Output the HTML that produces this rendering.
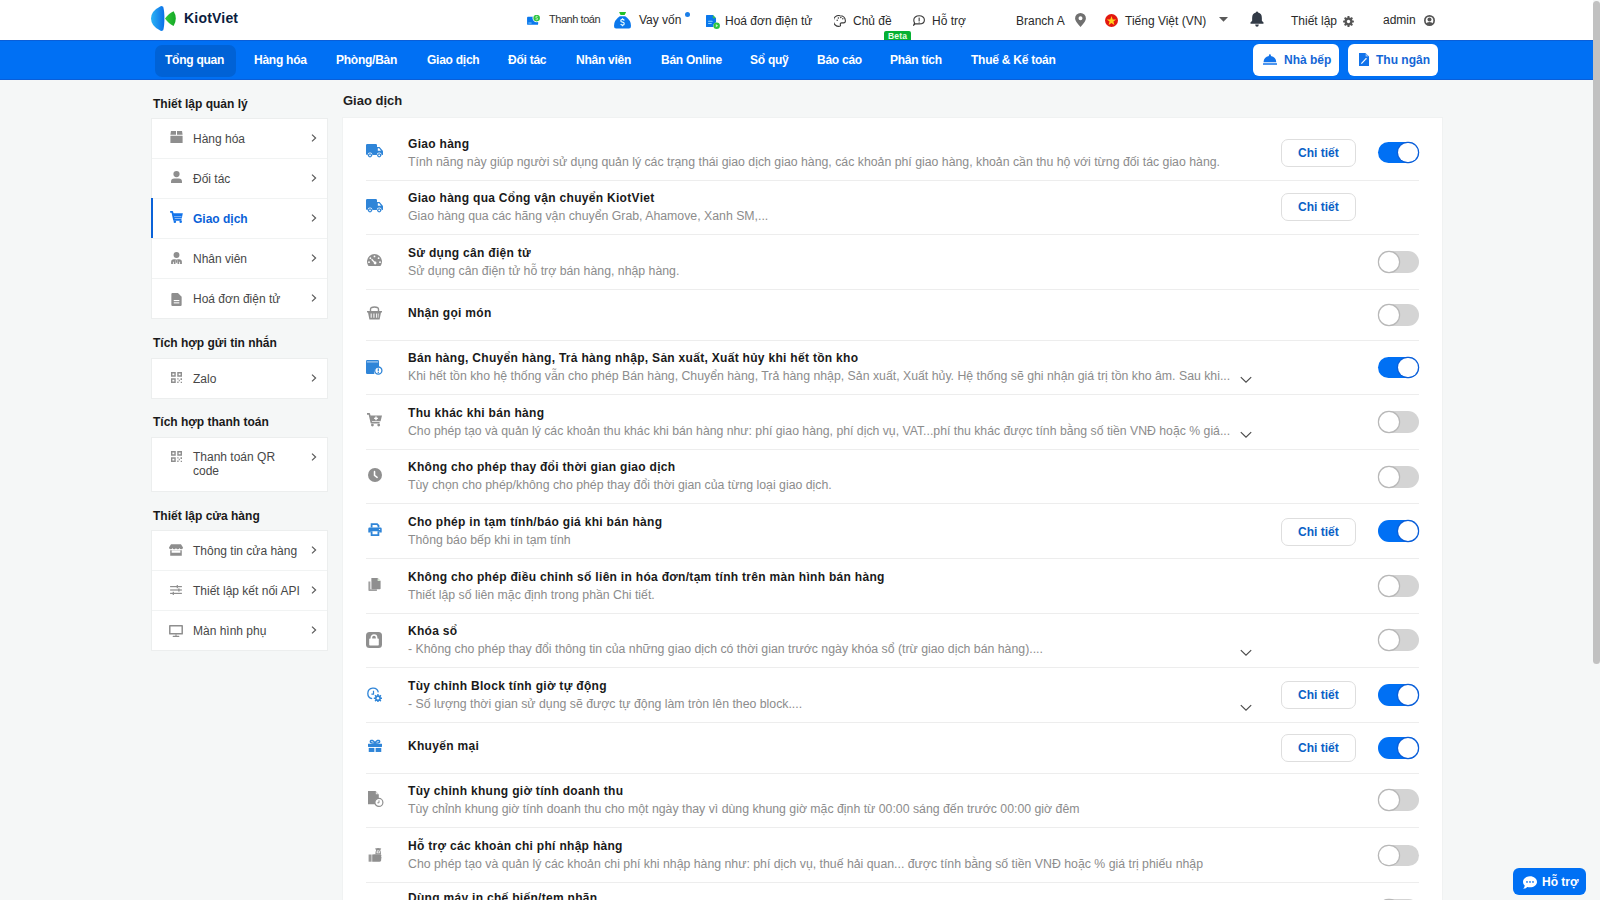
<!DOCTYPE html>
<html lang="vi"><head><meta charset="utf-8"><title>KiotViet - Thiết lập</title>
<style>
*{box-sizing:border-box;margin:0;padding:0}
html,body{width:1600px;height:900px;overflow:hidden}
body{background:#f5f7f7;font-family:"Liberation Sans",sans-serif;position:relative;color:#1a1a1a}
.a{position:absolute;white-space:nowrap}
.t12{font-size:12px;line-height:12px}
.hdr{position:absolute;left:0;top:0;width:1593px;height:40px;background:#fff}
.nav{position:absolute;left:0;top:40px;width:1593px;height:40px;background:#0070f4;border-top:1px solid #0a5ed8;border-bottom:1px solid #0a5ed8}
.navi{position:absolute;top:14px;color:#fff;font-weight:bold;font-size:12px;line-height:12px;white-space:nowrap}
.pill{position:absolute;left:155px;top:4px;width:81px;height:32px;background:#0062d6;border-radius:7px}
.nbtn{position:absolute;top:4px;height:31px;background:#fff;border-radius:6px}
.nbtn span{position:absolute;top:10px;color:#0a5fd0;font-weight:bold;font-size:12px;line-height:12px;white-space:nowrap}
.htxt{position:absolute;font-size:12px;line-height:12px;color:#2a2a2a;white-space:nowrap}
.sh{position:absolute;left:153px;font-size:12px;line-height:12px;font-weight:bold;color:#1a1a1a;white-space:nowrap}
.card{position:absolute;left:151px;width:177px;background:#fff;border:1px solid #eef0f0}
.srow{position:absolute;left:0;width:175px;height:40px;border-top:1px solid #f0f2f2}
.srow .lb{position:absolute;left:41px;top:14px;font-size:12px;line-height:12px;color:#474747;white-space:nowrap}
.srow .ic{position:absolute;left:18px;top:12px}
.chev{position:absolute;left:159px;top:16px}
.panel{position:absolute;left:343px;top:117px;width:1099px;height:800px;background:#fff}
.sep{position:absolute;left:366px;width:1053px;height:1px;background:#ececec}
.rt{position:absolute;left:408px;font-size:12px;line-height:12px;font-weight:bold;color:#1a1a1a;white-space:nowrap}
.rd{position:absolute;left:408px;font-size:12px;line-height:12px;color:#8c8c8c;white-space:nowrap}
.btn{position:absolute;left:1281px;width:75px;height:28px;border:1px solid #dcdcdc;border-radius:7px;background:#fff}
.btn span{position:absolute;left:16px;top:7px;font-size:12px;line-height:12px;font-weight:bold;color:#0a5fc7;white-space:nowrap}
.tg{position:absolute;left:1377px;width:42px;height:22px;border-radius:11px}
.tg.on{background:#0070f4}
.tg.off{background:#d4d4d4}
.tg .k{position:absolute;top:1px;width:20px;height:20px;border-radius:10px;background:#fff}
.tg.on .k{left:21px;box-shadow:0 0 0 1px #0a5ed8}
.tg.off .k{left:1px;box-shadow:0 0 0 1px #bdbdbd}
.ic{position:absolute}
</style></head><body>
<div class="hdr"></div>
<svg class="ic" style="left:151px;top:6px" width="25" height="25" viewBox="0 0 25 25" ><defs><linearGradient id="lgb" x1="0" y1="0" x2="1" y2="0"><stop offset="0" stop-color="#2bb3f5"/><stop offset="1" stop-color="#0a6fe8"/></linearGradient><linearGradient id="lgg" x1="0" y1="0" x2="1" y2="0"><stop offset="0" stop-color="#34c93a"/><stop offset="1" stop-color="#13a826"/></linearGradient></defs><path fill="url(#lgb)" d="M9.6 0.2Q10.6 -0.2 12.2 0.8Q13.4 5 13.4 12.4Q13.4 20 12.2 24.2Q10.6 25.2 9.6 24.8Q0 20 0 12.4Q0 5 9.6 0.2Z"/><path fill="url(#lgg)" d="M14 12.6Q18 7 22.6 5.2Q24.8 8.5 24.8 12.6Q24.8 16.8 22.6 20Q18 18.2 14 12.6Z"/></svg>
<div class="a" style="left:184px;top:11px;font-size:14px;line-height:14px;font-weight:bold;color:#0c1d40;letter-spacing:0.2px">KiotViet</div>
<svg class="ic" style="left:527px;top:15px" width="14" height="10" viewBox="0 0 13 9.4" ><path fill="#0b78ec" d="M0.8 1.6H6L10.4 6.4V8.4Q10.4 9.2 9.6 9.2H0.8Q0 9.2 0 8.4V2.4Q0 1.6 0.8 1.6Z"/><rect x="1.2" y="7" width="3" height="1.1" fill="#6cc0ff"/><circle cx="9" cy="2.9" r="3.9" fill="#fff"/><circle cx="9" cy="2.9" r="3.1" fill="#2fc43e"/><path fill="none" stroke="#d4f7d4" stroke-width="0.8" d="M10 1.7Q9.7 1.3 9 1.3Q8.1 1.3 8.1 2Q8.1 2.6 9 2.8Q9.9 3 9.9 3.7Q9.9 4.4 9 4.4Q8.3 4.4 8 4"/></svg>
<div class="a" style="left:549px;top:14px;font-size:11px;line-height:11px;font-weight:normal;color:#333;letter-spacing:-0.45px">Thanh toán</div>
<svg class="ic" style="left:614.2px;top:11.8px" width="17" height="17" viewBox="0 0 16.6 16.6" ><path fill="#22c228" d="M5 0H11.8L10.4 2.9H6.4Z"/><path fill="#0b78ec" d="M5.6 4.2H11Q16.6 8 16.6 13.6Q16.6 16.2 14.6 16.2H2Q0 16.2 0 13.6Q0 8 5.6 4.2Z"/><path fill="none" stroke="#e6fbff" stroke-width="1.2" d="M10 8.2Q9.6 7.2 8.3 7.2Q6.6 7.2 6.6 8.5Q6.6 9.6 8.3 9.9Q10 10.2 10 11.5Q10 12.8 8.3 12.8Q7 12.8 6.6 11.8"/><path stroke="#e6fbff" stroke-width="1.1" d="M8.3 6.2V7.4M8.3 12.6V13.8"/></svg>
<div class="a" style="left:639px;top:14px;font-size:12px;line-height:12px;font-weight:normal;color:#2a2a2a;">Vay vốn</div>
<div class="a" style="left:685px;top:12px;width:5px;height:5px;border-radius:3px;background:#1a7ee8"></div>
<svg class="ic" style="left:706px;top:15px" width="14" height="14" viewBox="0 0 13.4 13.4" ><path fill="#0b78ec" d="M0.6 0H6.6L9.6 3.2V7.2A3.2 3.2 0 0 0 7.2 11.6H0.6Q0 11.6 0 11V0.6Q0 0 0.6 0Z"/><path fill="#36c44a" d="M6.6 0L9.6 3.2H6.6Z"/><rect x="2" y="5.4" width="4.4" height="1.1" rx="0.5" fill="#8fd3ff"/><rect x="2" y="7.6" width="3.6" height="1.1" rx="0.5" fill="#8fd3ff"/><circle cx="10.2" cy="10.2" r="3.1" fill="#2fc43e"/><path fill="#c9f5c9" d="M9.4 8.7L11.6 10.2L9.4 11.7Z"/></svg>
<div class="a" style="left:725px;top:15px;font-size:12px;line-height:12px;font-weight:normal;color:#2a2a2a;">Hoá đơn điện tử</div>
<svg class="ic" style="left:834px;top:15px" width="12" height="12" viewBox="0 0 12 11.8" ><path fill="none" stroke="#3a3a3a" stroke-width="1.1" d="M6 0.6A5.4 5.4 0 1 0 5.6 11.2Q6.8 11 6.4 9.6Q5.8 7.8 7.8 7.8H9.6Q11.4 7.8 11.4 5.6Q11 0.6 6 0.6Z"/><circle cx="3.2" cy="5.2" r="0.75" fill="#3a3a3a"/><circle cx="4.4" cy="3" r="0.75" fill="#3a3a3a"/><circle cx="6.8" cy="2.4" r="0.75" fill="#3a3a3a"/><circle cx="8.8" cy="3.6" r="0.75" fill="#3a3a3a"/></svg>
<div class="a" style="left:853px;top:15px;font-size:12px;line-height:12px;font-weight:normal;color:#2a2a2a;">Chủ đề</div>
<div class="a" style="left:884px;top:31px;width:27px;height:9px;background:#06b033;border-radius:2px 2px 0 0"></div>
<div class="a" style="left:888px;top:31.5px;font-size:8.5px;line-height:8.5px;font-weight:bold;color:#e8ffe8;letter-spacing:0.2px">Beta</div>
<svg class="ic" style="left:913px;top:15px" width="12" height="11" viewBox="0 0 12 11" ><path fill="none" stroke="#3a3a3a" stroke-width="1.1" stroke-linejoin="round" d="M6.2 0.8C9.4 0.8 11.4 2.6 11.4 4.9C11.4 7.2 9.4 8.9 6.2 8.9H2.2L0.6 10.3L1.6 8C1 7.2 0.8 6 0.8 4.9C0.8 2.6 3 0.8 6.2 0.8Z"/><rect x="5.6" y="2.6" width="1.1" height="3.4" fill="#3a3a3a"/><rect x="5.6" y="6.6" width="1.1" height="1" fill="#3a3a3a"/></svg>
<div class="a" style="left:932px;top:15px;font-size:12px;line-height:12px;font-weight:normal;color:#2a2a2a;">Hỗ trợ</div>
<div class="a" style="left:1016px;top:15px;font-size:12px;line-height:12px;font-weight:normal;color:#2a2a2a;">Branch A</div>
<svg class="ic" style="left:1075px;top:12.5px" width="11" height="14" viewBox="0 0 10.4 13.4" ><path fill="#707070" fill-rule="evenodd" d="M5.2 0A5.2 5.2 0 0 1 10.4 5.2Q10.4 7.6 5.2 13.4Q0 7.6 0 5.2A5.2 5.2 0 0 1 5.2 0ZM5.2 3.2A1.9 1.9 0 1 0 5.2 7A1.9 1.9 0 1 0 5.2 3.2Z"/></svg>
<svg class="ic" style="left:1105px;top:14px" width="13" height="13" viewBox="0 0 13 13" ><circle cx="6.5" cy="6.5" r="6.5" fill="#e3180f"/><polygon points="6.50,2.10 7.68,5.38 11.16,5.49 8.40,7.62 9.38,10.96 6.50,9.00 3.62,10.96 4.60,7.62 1.84,5.49 5.32,5.38" fill="#ffd21e"/></svg>
<div class="a" style="left:1125px;top:15px;font-size:12px;line-height:12px;font-weight:normal;color:#2a2a2a;">Tiếng Việt (VN)</div>
<svg class="ic" style="left:1219px;top:17px" width="9" height="5" viewBox="0 0 9 5" ><path fill="#5a5a5a" d="M0 0H9L4.5 4.8Z"/></svg>
<svg class="ic" style="left:1250px;top:11px" width="14" height="16" viewBox="0 0 13.6 15.8" ><path fill="#323a46" d="M6.8 0.6Q7.8 0.6 7.9 1.5Q11.6 2.4 11.6 6.8V9.6L13.4 11.6Q13.6 12.6 12.6 12.6H1Q0 12.6 0.2 11.6L2 9.6V6.8Q2 2.4 5.7 1.5Q5.8 0.6 6.8 0.6Z"/><path fill="#323a46" d="M5 13.4H8.6Q8.4 15.6 6.8 15.6Q5.2 15.6 5 13.4Z"/></svg>
<div class="a" style="left:1291px;top:15px;font-size:12px;line-height:12px;font-weight:normal;color:#2a2a2a;">Thiết lập</div>
<svg class="ic" style="left:1343px;top:15.6px" width="11" height="11" viewBox="0 0 10.6 10.4" ><rect x="4.3" y="0" width="2" height="3" rx="0.5" fill="#555" transform="rotate(0 5.3 5.2)"/><rect x="4.3" y="0" width="2" height="3" rx="0.5" fill="#555" transform="rotate(45 5.3 5.2)"/><rect x="4.3" y="0" width="2" height="3" rx="0.5" fill="#555" transform="rotate(90 5.3 5.2)"/><rect x="4.3" y="0" width="2" height="3" rx="0.5" fill="#555" transform="rotate(135 5.3 5.2)"/><rect x="4.3" y="0" width="2" height="3" rx="0.5" fill="#555" transform="rotate(180 5.3 5.2)"/><rect x="4.3" y="0" width="2" height="3" rx="0.5" fill="#555" transform="rotate(225 5.3 5.2)"/><rect x="4.3" y="0" width="2" height="3" rx="0.5" fill="#555" transform="rotate(270 5.3 5.2)"/><rect x="4.3" y="0" width="2" height="3" rx="0.5" fill="#555" transform="rotate(315 5.3 5.2)"/><circle cx="5.3" cy="5.2" r="3.8" fill="#555"/><circle cx="5.3" cy="5.2" r="1.6" fill="#fff"/></svg>
<div class="a" style="left:1383px;top:14px;font-size:12px;line-height:12px;font-weight:normal;color:#2a2a2a;">admin</div>
<svg class="ic" style="left:1424px;top:15px" width="11" height="11" viewBox="0 0 10.4 10.4" ><circle cx="5.2" cy="5.2" r="4.4" fill="none" stroke="#555" stroke-width="1.6"/><circle cx="5.2" cy="4.3" r="1.9" fill="#555"/><path fill="#555" d="M1.9 8.6Q2.6 6.6 5.2 6.6Q7.8 6.6 8.5 8.6Q7.2 9.8 5.2 9.8Q3.2 9.8 1.9 8.6Z"/></svg>
<div class="nav"><div class="pill"></div></div>
<div class="a" style="left:165px;top:54px;font-size:12px;line-height:12px;font-weight:bold;color:#fff;letter-spacing:-0.25px">Tổng quan</div>
<div class="a" style="left:254px;top:54px;font-size:12px;line-height:12px;font-weight:bold;color:#fff;letter-spacing:-0.25px">Hàng hóa</div>
<div class="a" style="left:336px;top:54px;font-size:12px;line-height:12px;font-weight:bold;color:#fff;letter-spacing:-0.25px">Phòng/Bàn</div>
<div class="a" style="left:427px;top:54px;font-size:12px;line-height:12px;font-weight:bold;color:#fff;letter-spacing:-0.25px">Giao dịch</div>
<div class="a" style="left:508px;top:54px;font-size:12px;line-height:12px;font-weight:bold;color:#fff;letter-spacing:-0.25px">Đối tác</div>
<div class="a" style="left:576px;top:54px;font-size:12px;line-height:12px;font-weight:bold;color:#fff;letter-spacing:-0.25px">Nhân viên</div>
<div class="a" style="left:661px;top:54px;font-size:12px;line-height:12px;font-weight:bold;color:#fff;letter-spacing:-0.25px">Bán Online</div>
<div class="a" style="left:750px;top:54px;font-size:12px;line-height:12px;font-weight:bold;color:#fff;letter-spacing:-0.25px">Sổ quỹ</div>
<div class="a" style="left:817px;top:54px;font-size:12px;line-height:12px;font-weight:bold;color:#fff;letter-spacing:-0.25px">Báo cáo</div>
<div class="a" style="left:890px;top:54px;font-size:12px;line-height:12px;font-weight:bold;color:#fff;letter-spacing:-0.25px">Phân tích</div>
<div class="a" style="left:971px;top:54px;font-size:12px;line-height:12px;font-weight:bold;color:#fff;letter-spacing:-0.25px">Thuế &amp; Kế toán</div>
<div class="a" style="left:1253px;top:44px;width:86px;height:32px;background:#fff;border-radius:6px"></div>
<svg class="ic" style="left:1263px;top:54px" width="14" height="11" viewBox="0 0 14 10.6" ><path fill="#1273ea" d="M6 0Q7 0 7 1V1.8Q12 2.6 12.4 8H-0.4Q0 2.6 5 1.8V1Q5 0 6 0Z" transform="translate(0.9 0)"/><rect x="0" y="9" width="14" height="1.6" rx="0.3" fill="#1273ea"/></svg>
<div class="a" style="left:1284px;top:54px;font-size:12px;line-height:12px;font-weight:bold;color:#1466d6;">Nhà bếp</div>
<div class="a" style="left:1348px;top:44px;width:90px;height:32px;background:#fff;border-radius:6px"></div>
<svg class="ic" style="left:1359px;top:53px" width="10" height="13" viewBox="0 0 10 13" ><path fill="#1273ea" d="M0 0H6.4L10 3.6V13H0Z"/><path fill="#fff" d="M6.6 0.6V3.4H9.4Z" opacity="0.55"/><path fill="none" stroke="#fff" stroke-width="1.2" d="M2.4 10.6L6.6 6.2"/><circle cx="7" cy="5.8" r="0.8" fill="#fff"/></svg>
<div class="a" style="left:1376px;top:54px;font-size:12px;line-height:12px;font-weight:bold;color:#1466d6;">Thu ngân</div>
<div class="a" style="left:153px;top:98px;font-size:12px;line-height:12px;font-weight:bold;color:#1a1a1a;">Thiết lập quản lý</div>
<div class="a" style="left:151px;top:118px;width:177px;height:201px;background:#fff;border:1px solid #eceeee"></div>
<svg class="ic" style="left:170px;top:131px" width="13" height="12" viewBox="0 0 12.2 12" ><path fill="#8e8e8e" d="M0.6 0H5.6V3.8H0Z"/><path fill="#8e8e8e" d="M6.6 0H11.6L12.2 3.8H6.6Z"/><rect x="0" y="4.8" width="12.2" height="7.2" rx="0.3" fill="#8e8e8e"/></svg>
<div class="a" style="left:193px;top:133px;font-size:12px;line-height:12px;font-weight:normal;color:#474747;">Hàng hóa</div>
<svg class="ic" style="left:311px;top:134px" width="6" height="8" viewBox="0 0 6 8" ><path fill="none" stroke="#5a5a5a" stroke-width="1.2" d="M1 0.6L4.6 4L1 7.4"/></svg>
<div class="a" style="left:152px;top:158px;width:175px;height:1px;background:#f1f3f3"></div>
<svg class="ic" style="left:170.6px;top:171px" width="11" height="12" viewBox="0 0 10.6 11.6" ><circle cx="5.3" cy="3" r="3" fill="#8e8e8e"/><path fill="#8e8e8e" d="M0 11.6V10.3Q0 7.3 3.2 7.3H7.4Q10.6 7.3 10.6 10.3V11.6Z"/></svg>
<div class="a" style="left:193px;top:173px;font-size:12px;line-height:12px;font-weight:normal;color:#474747;">Đối tác</div>
<svg class="ic" style="left:311px;top:174px" width="6" height="8" viewBox="0 0 6 8" ><path fill="none" stroke="#5a5a5a" stroke-width="1.2" d="M1 0.6L4.6 4L1 7.4"/></svg>
<div class="a" style="left:152px;top:198px;width:175px;height:1px;background:#f1f3f3"></div>
<div class="a" style="left:151px;top:198px;width:2px;height:40px;background:#0a62d8"></div>
<svg class="ic" style="left:169.5px;top:211px" width="13" height="12" viewBox="0 0 13 12.3" ><path fill="none" stroke="#1273ea" stroke-width="1.8" stroke-linejoin="round" d="M0 1H2.2L4 9.2H11.6"/><path fill="#1273ea" d="M2.8 2.4H13L11.8 7.8H3.8Z"/><rect x="4" y="5.2" width="7.6" height="1" fill="#7fb3f5"/><circle cx="4.8" cy="11" r="1.3" fill="#1273ea"/><circle cx="10.8" cy="11" r="1.3" fill="#1273ea"/></svg>
<div class="a" style="left:193px;top:213px;font-size:12px;line-height:12px;font-weight:bold;color:#0a62d8;">Giao dịch</div>
<svg class="ic" style="left:311px;top:214px" width="6" height="8" viewBox="0 0 6 8" ><path fill="none" stroke="#5a5a5a" stroke-width="1.2" d="M1 0.6L4.6 4L1 7.4"/></svg>
<div class="a" style="left:152px;top:238px;width:175px;height:1px;background:#f1f3f3"></div>
<svg class="ic" style="left:170.6px;top:251.5px" width="11" height="12" viewBox="0 0 10.6 11.8" ><circle cx="5.3" cy="2.9" r="2.9" fill="#8e8e8e"/><path fill="#8e8e8e" d="M0 11.8V9.8Q0 7.2 2.8 7.2H7.8Q10.6 7.2 10.6 9.8V11.8Z"/><path fill="#fff" d="M4.6 7.2H6L6.4 11.8H4.2Z" opacity="0.9"/><path fill="#8e8e8e" d="M4.9 7.6H5.7L5.9 10.6H4.7Z"/><rect x="1.8" y="9.6" width="1" height="2.2" fill="#fff" opacity="0.8"/><rect x="7.8" y="9.6" width="1" height="2.2" fill="#fff" opacity="0.8"/></svg>
<div class="a" style="left:193px;top:253px;font-size:12px;line-height:12px;font-weight:normal;color:#474747;">Nhân viên</div>
<svg class="ic" style="left:311px;top:254px" width="6" height="8" viewBox="0 0 6 8" ><path fill="none" stroke="#5a5a5a" stroke-width="1.2" d="M1 0.6L4.6 4L1 7.4"/></svg>
<div class="a" style="left:152px;top:278px;width:175px;height:1px;background:#f1f3f3"></div>
<svg class="ic" style="left:171px;top:292.5px" width="11" height="13" viewBox="0 0 10.3 13" ><path fill="#8e8e8e" d="M1 0H6.6L10.3 3.7V12Q10.3 13 9.3 13H1Q0 13 0 12V1Q0 0 1 0Z"/><rect x="2.4" y="7" width="5.6" height="1.1" fill="#fff"/><rect x="2.4" y="9.3" width="5.6" height="1.1" fill="#fff"/></svg>
<div class="a" style="left:193px;top:293px;font-size:12px;line-height:12px;font-weight:normal;color:#474747;">Hoá đơn điện tử</div>
<svg class="ic" style="left:311px;top:294px" width="6" height="8" viewBox="0 0 6 8" ><path fill="none" stroke="#5a5a5a" stroke-width="1.2" d="M1 0.6L4.6 4L1 7.4"/></svg>
<div class="a" style="left:153px;top:337px;font-size:12px;line-height:12px;font-weight:bold;color:#1a1a1a;">Tích hợp gửi tin nhắn</div>
<div class="a" style="left:151px;top:358px;width:177px;height:41px;background:#fff;border:1px solid #eceeee"></div>
<svg class="ic" style="left:171px;top:372px" width="11" height="11" viewBox="0 0 10.2 10.2" ><path fill="#8e8e8e" fill-rule="evenodd" d="M0 0H4.4V4.4H0ZM1.3 1.3V3.1H3.1V1.3Z"/><path fill="#8e8e8e" fill-rule="evenodd" d="M5.8 0H10.2V4.4H5.8ZM7.1 1.3V3.1H8.9V1.3Z"/><path fill="#8e8e8e" fill-rule="evenodd" d="M0 5.8H4.4V10.2H0ZM1.3 7.1V8.9H3.1V7.1Z"/><path fill="#8e8e8e" d="M5.8 5.8H7V7H5.8ZM7.2 7.2H8.2V8.6H7.2ZM8.8 5.8H10.2V7.4H8.8ZM5.8 8.8H7V10.2H5.8ZM9 9H10.2V10.2H9Z"/></svg>
<div class="a" style="left:193px;top:373px;font-size:12px;line-height:12px;font-weight:normal;color:#474747;">Zalo</div>
<svg class="ic" style="left:311px;top:374px" width="6" height="8" viewBox="0 0 6 8" ><path fill="none" stroke="#5a5a5a" stroke-width="1.2" d="M1 0.6L4.6 4L1 7.4"/></svg>
<div class="a" style="left:153px;top:416px;font-size:12px;line-height:12px;font-weight:bold;color:#1a1a1a;">Tích hợp thanh toán</div>
<div class="a" style="left:151px;top:437px;width:177px;height:55px;background:#fff;border:1px solid #eceeee"></div>
<svg class="ic" style="left:171px;top:451px" width="11" height="11" viewBox="0 0 10.2 10.2" ><path fill="#8e8e8e" fill-rule="evenodd" d="M0 0H4.4V4.4H0ZM1.3 1.3V3.1H3.1V1.3Z"/><path fill="#8e8e8e" fill-rule="evenodd" d="M5.8 0H10.2V4.4H5.8ZM7.1 1.3V3.1H8.9V1.3Z"/><path fill="#8e8e8e" fill-rule="evenodd" d="M0 5.8H4.4V10.2H0ZM1.3 7.1V8.9H3.1V7.1Z"/><path fill="#8e8e8e" d="M5.8 5.8H7V7H5.8ZM7.2 7.2H8.2V8.6H7.2ZM8.8 5.8H10.2V7.4H8.8ZM5.8 8.8H7V10.2H5.8ZM9 9H10.2V10.2H9Z"/></svg>
<div class="a" style="left:193px;top:451px;font-size:12px;line-height:12px;font-weight:normal;color:#474747;">Thanh toán QR</div>
<div class="a" style="left:193px;top:465px;font-size:12px;line-height:12px;font-weight:normal;color:#474747;">code</div>
<svg class="ic" style="left:311px;top:453px" width="6" height="8" viewBox="0 0 6 8" ><path fill="none" stroke="#5a5a5a" stroke-width="1.2" d="M1 0.6L4.6 4L1 7.4"/></svg>
<div class="a" style="left:153px;top:510px;font-size:12px;line-height:12px;font-weight:bold;color:#1a1a1a;">Thiết lập cửa hàng</div>
<div class="a" style="left:151px;top:530px;width:177px;height:121px;background:#fff;border:1px solid #eceeee"></div>
<svg class="ic" style="left:169px;top:544px" width="14" height="12" viewBox="0 0 13.8 11.3" ><path fill="#8e8e8e" d="M2 0H11.8L13.8 3.2Q13.8 5 12.2 5Q10.6 5 10.4 3.8Q10 5 8.6 5Q7.2 5 6.9 3.8Q6.5 5 5.1 5Q3.7 5 3.4 3.8Q3.1 5 1.6 5Q0 5 0 3.2Z"/><path fill="#8e8e8e" d="M1.2 5.8H12.6V11.3H1.2ZM2.6 6.2V8.3H11.2V6.2Z" fill-rule="evenodd"/></svg>
<div class="a" style="left:193px;top:545px;font-size:12px;line-height:12px;font-weight:normal;color:#474747;">Thông tin cửa hàng</div>
<svg class="ic" style="left:311px;top:546px" width="6" height="8" viewBox="0 0 6 8" ><path fill="none" stroke="#5a5a5a" stroke-width="1.2" d="M1 0.6L4.6 4L1 7.4"/></svg>
<div class="a" style="left:152px;top:570px;width:175px;height:1px;background:#f1f3f3"></div>
<svg class="ic" style="left:170px;top:585px" width="12" height="10" viewBox="0 0 11.8 10" ><rect x="0" y="1" width="11.8" height="1.2" fill="#8e8e8e"/><rect x="6.6" y="0" width="1.2" height="3.2" fill="#8e8e8e"/><rect x="0" y="4.4" width="11.8" height="1.2" fill="#8e8e8e"/><rect x="8.2" y="3.4" width="1.2" height="3.2" fill="#8e8e8e"/><rect x="0" y="7.8" width="11.8" height="1.2" fill="#8e8e8e"/><rect x="2.6" y="6.8" width="1.2" height="3.2" fill="#8e8e8e"/></svg>
<div class="a" style="left:193px;top:585px;font-size:12px;line-height:12px;font-weight:normal;color:#474747;">Thiết lập kết nối API</div>
<svg class="ic" style="left:311px;top:586px" width="6" height="8" viewBox="0 0 6 8" ><path fill="none" stroke="#5a5a5a" stroke-width="1.2" d="M1 0.6L4.6 4L1 7.4"/></svg>
<div class="a" style="left:152px;top:610px;width:175px;height:1px;background:#f1f3f3"></div>
<svg class="ic" style="left:168.6px;top:624.5px" width="14" height="12" viewBox="0 0 13.2 11.4" ><path fill="#8e8e8e" fill-rule="evenodd" d="M0.8 0H12.4Q13.2 0 13.2 0.8V8.2Q13.2 9 12.4 9H0.8Q0 9 0 8.2V0.8Q0 0 0.8 0ZM1.4 1.4V7.6H11.8V1.4Z"/><rect x="5.9" y="9" width="1.4" height="1.2" fill="#8e8e8e"/><rect x="3.4" y="10.2" width="6.4" height="1.2" rx="0.4" fill="#8e8e8e"/></svg>
<div class="a" style="left:193px;top:625px;font-size:12px;line-height:12px;font-weight:normal;color:#474747;">Màn hình phụ</div>
<svg class="ic" style="left:311px;top:626px" width="6" height="8" viewBox="0 0 6 8" ><path fill="none" stroke="#5a5a5a" stroke-width="1.2" d="M1 0.6L4.6 4L1 7.4"/></svg>
<div class="a" style="left:343px;top:94px;font-size:13px;line-height:13px;font-weight:bold;color:#1f1f1f;">Giao dịch</div>
<div class="a" style="left:342px;top:117px;width:1101px;height:800px;background:#fff;border:1px solid #f0f2f2;border-bottom:none"></div>
<svg class="ic" style="left:366px;top:144px" width="17" height="14" viewBox="0 0 17 14" ><path fill="#2f85d8" d="M0 1.2Q0 0 1.2 0H9.8Q11 0 11 1.2V3H13.6L16.6 6.6Q17 7 17 7.6V10.6Q17 11 16.6 11H15.6A2.4 2.4 0 0 0 10.8 11H6.4A2.4 2.4 0 0 0 1.6 11H1.2Q0 11 0 9.8Z"/><path fill="#fff" d="M11.8 4.3H13.1L15 6.8H11.8Z"/><circle cx="4" cy="11.3" r="2.1" fill="#2f85d8"/><circle cx="4" cy="11.3" r="0.9" fill="#fff"/><circle cx="13.2" cy="11.3" r="2.1" fill="#2f85d8"/><circle cx="13.2" cy="11.3" r="0.9" fill="#fff"/></svg>
<div class="a" style="left:408px;top:137.5px;font-size:12px;line-height:12px;font-weight:bold;color:#1a1a1a;letter-spacing:0.3px">Giao hàng</div>
<div class="a" style="left:408px;top:155.7px;font-size:12.3px;line-height:12.3px;font-weight:normal;color:#8c8c8c;">Tính năng này giúp người sử dụng quản lý các trạng thái giao dịch giao hàng, các khoản phí giao hàng, khoản cần thu hộ với từng đối tác giao hàng.</div>
<div class="a" style="left:1281px;top:139px;width:75px;height:28px;border:1px solid #dedede;border-radius:7px;background:#fff"></div>
<div class="a" style="left:1298px;top:147px;font-size:12px;line-height:12px;font-weight:bold;color:#0b5fc6;">Chi tiết</div>
<div class="a" style="left:1377.5px;top:141.5px;width:41.5px;height:21.5px;border-radius:11px;background:#0070f4"></div>
<div class="a" style="left:1397.5px;top:142.5px;width:20px;height:19.5px;border-radius:10px;background:#fff;box-shadow:0 0 0 1.2px #0a5ed8"></div>
<div class="a" style="left:366px;top:180px;width:1053px;height:1px;background:#ededed"></div>
<svg class="ic" style="left:366px;top:199px" width="17" height="14" viewBox="0 0 17 14" ><path fill="#2f85d8" d="M0 1.2Q0 0 1.2 0H9.8Q11 0 11 1.2V3H13.6L16.6 6.6Q17 7 17 7.6V10.6Q17 11 16.6 11H15.6A2.4 2.4 0 0 0 10.8 11H6.4A2.4 2.4 0 0 0 1.6 11H1.2Q0 11 0 9.8Z"/><path fill="#fff" d="M11.8 4.3H13.1L15 6.8H11.8Z"/><circle cx="4" cy="11.3" r="2.1" fill="#2f85d8"/><circle cx="4" cy="11.3" r="0.9" fill="#fff"/><circle cx="13.2" cy="11.3" r="2.1" fill="#2f85d8"/><circle cx="13.2" cy="11.3" r="0.9" fill="#fff"/></svg>
<div class="a" style="left:408px;top:191.5px;font-size:12px;line-height:12px;font-weight:bold;color:#1a1a1a;letter-spacing:0.3px">Giao hàng qua Cổng vận chuyển KiotViet</div>
<div class="a" style="left:408px;top:209.7px;font-size:12.3px;line-height:12.3px;font-weight:normal;color:#8c8c8c;">Giao hàng qua các hãng vận chuyển Grab, Ahamove, Xanh SM,...</div>
<div class="a" style="left:1281px;top:193px;width:75px;height:28px;border:1px solid #dedede;border-radius:7px;background:#fff"></div>
<div class="a" style="left:1298px;top:201px;font-size:12px;line-height:12px;font-weight:bold;color:#0b5fc6;">Chi tiết</div>
<div class="a" style="left:366px;top:234px;width:1053px;height:1px;background:#ededed"></div>
<svg class="ic" style="left:367px;top:254px" width="15" height="12" viewBox="0 0 15 12" ><path fill="#8f8f8f" d="M1.5 12A7.5 7.5 0 1 1 13.5 12Z"/><circle cx="7.5" cy="2.4" r="0.9" fill="#fff"/><circle cx="3.4" cy="4.2" r="0.9" fill="#fff"/><circle cx="11.6" cy="4.2" r="0.9" fill="#fff"/><circle cx="2" cy="8.2" r="0.9" fill="#fff"/><circle cx="13" cy="8.2" r="0.9" fill="#fff"/><path d="M4.6 5.2L7.8 8.6" stroke="#fff" stroke-width="1.3"/><circle cx="8.1" cy="9" r="1.4" fill="#fff"/></svg>
<div class="a" style="left:408px;top:246.5px;font-size:12px;line-height:12px;font-weight:bold;color:#1a1a1a;letter-spacing:0.3px">Sử dụng cân điện tử</div>
<div class="a" style="left:408px;top:264.7px;font-size:12.3px;line-height:12.3px;font-weight:normal;color:#8c8c8c;">Sử dụng cân điện tử hỗ trợ bán hàng, nhập hàng.</div>
<div class="a" style="left:1377.5px;top:251px;width:41.5px;height:21.5px;border-radius:11px;background:#d4d4d4"></div>
<div class="a" style="left:1378.5px;top:252px;width:20px;height:19.5px;border-radius:10px;background:#fff;box-shadow:0 0 0 1.2px #b8b8b8"></div>
<div class="a" style="left:366px;top:289px;width:1053px;height:1px;background:#ededed"></div>
<svg class="ic" style="left:366.5px;top:306px" width="15" height="14" viewBox="0 0 15 14" ><path fill="none" stroke="#8f8f8f" stroke-width="1.4" d="M3.5 5.5V3.2Q3.5 1 7.5 1Q11.5 1 11.5 3.2V5.5"/><path fill="#8f8f8f" d="M0 5H15V6.6H14L12.6 13.5H2.4L1 6.6H0Z"/><path fill="#fff" d="M3.6 7.6H4.8V11.8H3.6ZM6.3 7.6H7.5V11.8H6.3ZM9 7.6H10.2V11.8H9ZM11.2 7.6H11.9L11.7 11.8H11.2Z" opacity="0.85"/></svg>
<div class="a" style="left:408px;top:306.5px;font-size:12px;line-height:12px;font-weight:bold;color:#1a1a1a;letter-spacing:0.3px">Nhận gọi món</div>
<div class="a" style="left:1377.5px;top:304.2px;width:41.5px;height:21.5px;border-radius:11px;background:#d4d4d4"></div>
<div class="a" style="left:1378.5px;top:305.2px;width:20px;height:19.5px;border-radius:10px;background:#fff;box-shadow:0 0 0 1.2px #b8b8b8"></div>
<div class="a" style="left:366px;top:340px;width:1053px;height:1px;background:#ededed"></div>
<svg class="ic" style="left:366px;top:360px" width="17" height="15" viewBox="0 0 17 15" ><path fill="#2f85d8" d="M0 1.2Q0 0 1.2 0H11.8Q13 0 13 1.2V7.5A4.5 4.5 0 0 0 8.5 14H1.2Q0 14 0 12.8Z"/><rect x="0.8" y="1.3" width="11.4" height="1.2" fill="#fff" opacity="0.6"/><circle cx="12.3" cy="10.6" r="3.6" fill="#fff" stroke="#2f85d8" stroke-width="1.3"/><rect x="11.7" y="8.4" width="1.2" height="2.9" fill="#2f85d8"/><rect x="11.7" y="11.9" width="1.2" height="1.1" fill="#2f85d8"/></svg>
<div class="a" style="left:408px;top:351.5px;font-size:12px;line-height:12px;font-weight:bold;color:#1a1a1a;letter-spacing:0.3px">Bán hàng, Chuyển hàng, Trả hàng nhập, Sản xuất, Xuất hủy khi hết tồn kho</div>
<div class="a" style="left:408px;top:369.7px;font-size:12.3px;line-height:12.3px;font-weight:normal;color:#8c8c8c;">Khi hết tồn kho hệ thống vẫn cho phép Bán hàng, Chuyển hàng, Trả hàng nhập, Sản xuất, Xuất hủy. Hệ thống sẽ ghi nhận giá trị tồn kho âm. Sau khi...</div>
<svg class="ic" style="left:1239.5px;top:376px" width="12" height="8" viewBox="0 0 12 8" ><path fill="none" stroke="#4a4a4a" stroke-width="1.15" d="M0.8 1.2L6 6.2L11.2 1.2"/></svg>
<div class="a" style="left:1377.5px;top:356.6px;width:41.5px;height:21.5px;border-radius:11px;background:#0070f4"></div>
<div class="a" style="left:1397.5px;top:357.6px;width:20px;height:19.5px;border-radius:10px;background:#fff;box-shadow:0 0 0 1.2px #0a5ed8"></div>
<div class="a" style="left:366px;top:394px;width:1053px;height:1px;background:#ededed"></div>
<svg class="ic" style="left:367px;top:413px" width="15" height="14" viewBox="0 0 15 14" ><path fill="none" stroke="#8f8f8f" stroke-width="1.6" stroke-linejoin="round" d="M0 0.9H2.3L4.4 9.8H12.6"/><path fill="#8f8f8f" d="M3 2.6H15L13.6 8.3H4.3Z"/><path fill="#fff" d="M8.3 3.6H9.7V4.8H10.9V6.1H9.7V7.3H8.3V6.1H7.1V4.8H8.3Z"/><circle cx="5.4" cy="12.1" r="1.4" fill="#8f8f8f"/><circle cx="11.7" cy="12.1" r="1.4" fill="#8f8f8f"/></svg>
<div class="a" style="left:408px;top:406.5px;font-size:12px;line-height:12px;font-weight:bold;color:#1a1a1a;letter-spacing:0.3px">Thu khác khi bán hàng</div>
<div class="a" style="left:408px;top:424.75px;font-size:12.25px;line-height:12.25px;font-weight:normal;color:#8c8c8c;">Cho phép tạo và quản lý các khoản thu khác khi bán hàng như: phí giao hàng, phí dịch vụ, VAT...phí thu khác được tính bằng số tiền VNĐ hoặc % giá...</div>
<svg class="ic" style="left:1239.5px;top:431px" width="12" height="8" viewBox="0 0 12 8" ><path fill="none" stroke="#4a4a4a" stroke-width="1.15" d="M0.8 1.2L6 6.2L11.2 1.2"/></svg>
<div class="a" style="left:1377.5px;top:411px;width:41.5px;height:21.5px;border-radius:11px;background:#d4d4d4"></div>
<div class="a" style="left:1378.5px;top:412px;width:20px;height:19.5px;border-radius:10px;background:#fff;box-shadow:0 0 0 1.2px #b8b8b8"></div>
<div class="a" style="left:366px;top:449px;width:1053px;height:1px;background:#ededed"></div>
<svg class="ic" style="left:367.5px;top:468px" width="14" height="14" viewBox="0 0 13.5 13.5" ><circle cx="6.75" cy="6.75" r="6.75" fill="#8f8f8f"/><path fill="none" stroke="#fff" stroke-width="1.5" stroke-linecap="round" d="M6.3 3.5V7.2L8.8 9"/></svg>
<div class="a" style="left:408px;top:460.5px;font-size:12px;line-height:12px;font-weight:bold;color:#1a1a1a;letter-spacing:0.3px">Không cho phép thay đổi thời gian giao dịch</div>
<div class="a" style="left:408px;top:478.7px;font-size:12.3px;line-height:12.3px;font-weight:normal;color:#8c8c8c;">Tùy chọn cho phép/không cho phép thay đổi thời gian của từng loại giao dịch.</div>
<div class="a" style="left:1377.5px;top:466px;width:41.5px;height:21.5px;border-radius:11px;background:#d4d4d4"></div>
<div class="a" style="left:1378.5px;top:467px;width:20px;height:19.5px;border-radius:10px;background:#fff;box-shadow:0 0 0 1.2px #b8b8b8"></div>
<div class="a" style="left:366px;top:503px;width:1053px;height:1px;background:#ededed"></div>
<svg class="ic" style="left:368px;top:522.6px" width="14" height="13" viewBox="0 0 13.4 13" ><path fill="none" stroke="#2f85d8" stroke-width="1.8" d="M3.3 4.5V1.2H8.8L10.2 2.6V4.5"/><path fill="#2f85d8" d="M1.2 4.5H12.2Q13.4 4.5 13.4 5.7V9.6H11V8.3H2.4V9.6H0V5.7Q0 4.5 1.2 4.5Z"/><path fill="none" stroke="#2f85d8" stroke-width="1.8" d="M3.3 8.3V12.1H10.1V8.3"/><rect x="10.6" y="6" width="1.2" height="0.9" fill="#fff"/></svg>
<div class="a" style="left:408px;top:515.5px;font-size:12px;line-height:12px;font-weight:bold;color:#1a1a1a;letter-spacing:0.3px">Cho phép in tạm tính/báo giá khi bán hàng</div>
<div class="a" style="left:408px;top:533.7px;font-size:12.3px;line-height:12.3px;font-weight:normal;color:#8c8c8c;">Thông báo bếp khi in tạm tính</div>
<div class="a" style="left:1281px;top:517.6px;width:75px;height:28px;border:1px solid #dedede;border-radius:7px;background:#fff"></div>
<div class="a" style="left:1298px;top:525.6px;font-size:12px;line-height:12px;font-weight:bold;color:#0b5fc6;">Chi tiết</div>
<div class="a" style="left:1377.5px;top:520px;width:41.5px;height:21.5px;border-radius:11px;background:#0070f4"></div>
<div class="a" style="left:1397.5px;top:521px;width:20px;height:19.5px;border-radius:10px;background:#fff;box-shadow:0 0 0 1.2px #0a5ed8"></div>
<div class="a" style="left:366px;top:558px;width:1053px;height:1px;background:#ededed"></div>
<svg class="ic" style="left:368px;top:577.8px" width="13" height="13" viewBox="0 0 12.2 13" ><path fill="#8f8f8f" opacity="0.85" d="M0 3.5H2V11.2H8.5V13H0.8Q0 13 0 12.2Z"/><path fill="#8f8f8f" d="M3 0H9.2L12.2 3V10.4Q12.2 11.2 11.4 11.2H3.8Q3 11.2 3 10.4Z"/><path fill="#fff" d="M9.3 0.3V3H12" opacity="0.9"/><path fill="#cfe8c8" d="M9.6 0.6L11.8 2.8H9.6Z"/></svg>
<div class="a" style="left:408px;top:570.5px;font-size:12px;line-height:12px;font-weight:bold;color:#1a1a1a;letter-spacing:0.3px">Không cho phép điều chỉnh số liên in hóa đơn/tạm tính trên màn hình bán hàng</div>
<div class="a" style="left:408px;top:588.7px;font-size:12.3px;line-height:12.3px;font-weight:normal;color:#8c8c8c;">Thiết lập số liên mặc định trong phần Chi tiết.</div>
<div class="a" style="left:1377.5px;top:575px;width:41.5px;height:21.5px;border-radius:11px;background:#d4d4d4"></div>
<div class="a" style="left:1378.5px;top:576px;width:20px;height:19.5px;border-radius:10px;background:#fff;box-shadow:0 0 0 1.2px #b8b8b8"></div>
<div class="a" style="left:366px;top:613px;width:1053px;height:1px;background:#ededed"></div>
<svg class="ic" style="left:366.2px;top:631.8px" width="16" height="16" viewBox="0 0 16 16" ><rect x="0" y="0" width="16" height="16" rx="3.5" fill="#8f8f8f"/><path fill="none" stroke="#fff" stroke-width="1.6" d="M5.4 7V5.6A2.6 2.6 0 0 1 10.6 5.6V7"/><rect x="3.2" y="6.6" width="9.6" height="7" rx="0.8" fill="#fff"/><circle cx="8" cy="4.6" r="0.7" fill="#8f8f8f"/></svg>
<div class="a" style="left:408px;top:624.5px;font-size:12px;line-height:12px;font-weight:bold;color:#1a1a1a;letter-spacing:0.3px">Khóa sổ</div>
<div class="a" style="left:408px;top:642.7px;font-size:12.3px;line-height:12.3px;font-weight:normal;color:#8c8c8c;">- Không cho phép thay đổi thông tin của những giao dịch có thời gian trước ngày khóa sổ (trừ giao dịch bán hàng)....</div>
<svg class="ic" style="left:1239.5px;top:649.3px" width="12" height="8" viewBox="0 0 12 8" ><path fill="none" stroke="#4a4a4a" stroke-width="1.15" d="M0.8 1.2L6 6.2L11.2 1.2"/></svg>
<div class="a" style="left:1377.5px;top:629px;width:41.5px;height:21.5px;border-radius:11px;background:#d4d4d4"></div>
<div class="a" style="left:1378.5px;top:630px;width:20px;height:19.5px;border-radius:10px;background:#fff;box-shadow:0 0 0 1.2px #b8b8b8"></div>
<div class="a" style="left:366px;top:667px;width:1053px;height:1px;background:#ededed"></div>
<svg class="ic" style="left:367px;top:687.2px" width="15" height="15" viewBox="0 0 15 15" ><path fill="none" stroke="#2f85d8" stroke-width="1.3" d="M5.2 11.7A5.3 5.3 0 1 1 11.3 5.3"/><path fill="none" stroke="#2f85d8" stroke-width="1.2" d="M6.5 3.7V7.2H4.4"/><rect x="10.2" y="7" width="1.5" height="8.4" rx="0.3" fill="#2f85d8" transform="rotate(0 10.95 11.2)"/><rect x="10.2" y="7" width="1.5" height="8.4" rx="0.3" fill="#2f85d8" transform="rotate(45 10.95 11.2)"/><rect x="10.2" y="7" width="1.5" height="8.4" rx="0.3" fill="#2f85d8" transform="rotate(90 10.95 11.2)"/><rect x="10.2" y="7" width="1.5" height="8.4" rx="0.3" fill="#2f85d8" transform="rotate(135 10.95 11.2)"/><circle cx="10.95" cy="11.2" r="2.9" fill="#2f85d8"/><circle cx="10.95" cy="11.2" r="1.2" fill="#fff"/></svg>
<div class="a" style="left:408px;top:679.5px;font-size:12px;line-height:12px;font-weight:bold;color:#1a1a1a;letter-spacing:0.3px">Tùy chỉnh Block tính giờ tự động</div>
<div class="a" style="left:408px;top:697.7px;font-size:12.3px;line-height:12.3px;font-weight:normal;color:#8c8c8c;">- Số lượng thời gian sử dụng sẽ được tự động làm tròn lên theo block....</div>
<svg class="ic" style="left:1239.5px;top:704.3px" width="12" height="8" viewBox="0 0 12 8" ><path fill="none" stroke="#4a4a4a" stroke-width="1.15" d="M0.8 1.2L6 6.2L11.2 1.2"/></svg>
<div class="a" style="left:1281px;top:681px;width:75px;height:28px;border:1px solid #dedede;border-radius:7px;background:#fff"></div>
<div class="a" style="left:1298px;top:689px;font-size:12px;line-height:12px;font-weight:bold;color:#0b5fc6;">Chi tiết</div>
<div class="a" style="left:1377.5px;top:684.4px;width:41.5px;height:21.5px;border-radius:11px;background:#0070f4"></div>
<div class="a" style="left:1397.5px;top:685.4px;width:20px;height:19.5px;border-radius:10px;background:#fff;box-shadow:0 0 0 1.2px #0a5ed8"></div>
<div class="a" style="left:366px;top:722px;width:1053px;height:1px;background:#ededed"></div>
<svg class="ic" style="left:367.8px;top:738.8px" width="14" height="13" viewBox="0 0 13.2 12.2" ><path fill="none" stroke="#2f85d8" stroke-width="1.4" d="M6.6 4C5.6 1.4 2.6 0.4 2.2 2.2C1.9 3.6 4.4 4 6.6 4ZM6.6 4C7.6 1.4 10.6 0.4 11 2.2C11.3 3.6 8.8 4 6.6 4Z"/><rect x="0" y="4.4" width="13.2" height="3" rx="0.4" fill="#2f85d8"/><rect x="0.7" y="8.4" width="5.3" height="3.8" fill="#2f85d8"/><rect x="7.2" y="8.4" width="5.3" height="3.8" fill="#2f85d8"/></svg>
<div class="a" style="left:408px;top:739.5px;font-size:12px;line-height:12px;font-weight:bold;color:#1a1a1a;letter-spacing:0.3px">Khuyến mại</div>
<div class="a" style="left:1281px;top:734.3px;width:75px;height:28px;border:1px solid #dedede;border-radius:7px;background:#fff"></div>
<div class="a" style="left:1298px;top:742.3px;font-size:12px;line-height:12px;font-weight:bold;color:#0b5fc6;">Chi tiết</div>
<div class="a" style="left:1377.5px;top:737px;width:41.5px;height:21.5px;border-radius:11px;background:#0070f4"></div>
<div class="a" style="left:1397.5px;top:738px;width:20px;height:19.5px;border-radius:10px;background:#fff;box-shadow:0 0 0 1.2px #0a5ed8"></div>
<div class="a" style="left:366px;top:773px;width:1053px;height:1px;background:#ededed"></div>
<svg class="ic" style="left:368.4px;top:791.4px" width="16" height="16" viewBox="0 0 16 16" ><path fill="#8f8f8f" d="M0 0H7.6L10.8 3.4V13.3H0Z"/><path fill="#e4e4e4" d="M7.8 0.4V3.3H10.6Z"/><circle cx="10.9" cy="11.4" r="4" fill="#fff" stroke="#8f8f8f" stroke-width="1.2"/><path fill="none" stroke="#8f8f8f" stroke-width="1" d="M11 9.4V11.8H9.4"/></svg>
<div class="a" style="left:408px;top:784.5px;font-size:12px;line-height:12px;font-weight:bold;color:#1a1a1a;letter-spacing:0.3px">Tùy chỉnh khung giờ tính doanh thu</div>
<div class="a" style="left:408px;top:802.7px;font-size:12.3px;line-height:12.3px;font-weight:normal;color:#8c8c8c;">Tùy chỉnh khung giờ tính doanh thu cho một ngày thay vì dùng khung giờ mặc định từ 00:00 sáng đến trước 00:00 giờ đêm</div>
<div class="a" style="left:1377.5px;top:789.4px;width:41.5px;height:21.5px;border-radius:11px;background:#d4d4d4"></div>
<div class="a" style="left:1378.5px;top:790.4px;width:20px;height:19.5px;border-radius:10px;background:#fff;box-shadow:0 0 0 1.2px #b8b8b8"></div>
<div class="a" style="left:366px;top:827px;width:1053px;height:1px;background:#ededed"></div>
<svg class="ic" style="left:368px;top:848.2px" width="14" height="14" viewBox="0 0 13.2 14" ><rect x="0.2" y="6.5" width="3" height="7.2" fill="#8f8f8f" opacity="0.9"/><path fill="#8f8f8f" d="M3.8 6.6L6.2 6.2H12.2Q13 6.4 13 7.4Q13 8.4 12.6 8.6Q13.1 8.9 13.1 9.8Q13.1 10.6 12.6 10.9Q13 11.3 12.8 12.2Q12.4 13.8 11 13.8H3.8Z"/><path fill="#8f8f8f" fill-rule="evenodd" d="M6.6 0.4Q9.7 -0.3 12.9 0.4L11.8 2.2Q12.6 3.4 12.6 6.2H7Q7 3.4 7.8 2.2ZM8.6 2.6Q8.2 3.6 8.2 5.2H11.4Q11.4 3.6 11 2.6Z"/><rect x="9.2" y="3.1" width="1.2" height="1.6" fill="#8f8f8f"/></svg>
<div class="a" style="left:408px;top:839.5px;font-size:12px;line-height:12px;font-weight:bold;color:#1a1a1a;letter-spacing:0.3px">Hỗ trợ các khoản chi phí nhập hàng</div>
<div class="a" style="left:408px;top:857.7px;font-size:12.3px;line-height:12.3px;font-weight:normal;color:#8c8c8c;">Cho phép tạo và quản lý các khoản chi phí khi nhập hàng như: phí dịch vụ, thuế hải quan... được tính bằng số tiền VNĐ hoặc % giá trị phiếu nhập</div>
<div class="a" style="left:1377.5px;top:844.5px;width:41.5px;height:21.5px;border-radius:11px;background:#d4d4d4"></div>
<div class="a" style="left:1378.5px;top:845.5px;width:20px;height:19.5px;border-radius:10px;background:#fff;box-shadow:0 0 0 1.2px #b8b8b8"></div>
<div class="a" style="left:366px;top:882px;width:1053px;height:1px;background:#ededed"></div>
<div class="a" style="left:408px;top:891.5px;font-size:12px;line-height:12px;font-weight:bold;color:#1a1a1a;letter-spacing:0.3px">Dùng máy in chế biến/tem nhãn</div>
<div class="a" style="left:1377.5px;top:898.5px;width:41.5px;height:21.5px;border-radius:11px;background:#d4d4d4"></div>
<div class="a" style="left:1378.5px;top:899.5px;width:20px;height:19.5px;border-radius:10px;background:#fff;box-shadow:0 0 0 1.2px #b8b8b8"></div>
<div class="a" style="left:1593px;top:0;width:7px;height:900px;background:#f5f7f7"></div>
<div class="a" style="left:1593px;top:1px;width:7px;height:663px;background:#c1c1c1;border-radius:4px"></div>
<div class="a" style="left:1513px;top:868px;width:73px;height:27px;background:#0070f4;border-radius:6px"></div>
<svg class="ic" style="left:1523px;top:875.5px" width="14" height="13" viewBox="0 0 14 12.4" ><path fill="#fff" d="M7 0C10.9 0 14 2.6 14 5.6C14 8.6 10.9 11 7 11Q5.6 11 4.3 10.6Q2.6 12.4 0.2 12.4Q1.8 11 1.7 9.3Q0 7.8 0 5.6C0 2.6 3.1 0 7 0Z"/><circle cx="4" cy="5.6" r="0.85" fill="#0070f4"/><circle cx="7" cy="5.6" r="0.85" fill="#0070f4"/><circle cx="10" cy="5.6" r="0.85" fill="#0070f4"/></svg>
<div class="a" style="left:1542px;top:876px;font-size:12px;line-height:12px;font-weight:bold;color:#fff;">Hỗ trợ</div>
</body></html>
